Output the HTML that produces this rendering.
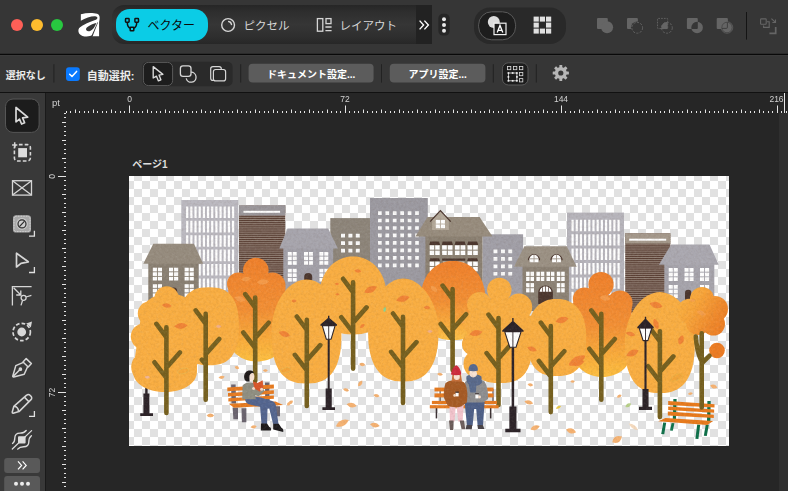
<!DOCTYPE html>
<html lang="ja"><head><meta charset="utf-8"><title>Affinity</title>
<style>
html,body{margin:0;padding:0;background:#262626;}
body{width:788px;height:491px;overflow:hidden;position:relative;font-family:"Liberation Sans",sans-serif;}
#top{position:absolute;left:0;top:0;width:788px;height:54px;background:#363636;}
#l1{position:absolute;left:0;top:53px;width:788px;height:3px;background:linear-gradient(#2b2b2b 0,#2b2b2b 33.3%,#090909 33.3%,#090909 66.6%,#3b3b3b 66.6%);}
#tb2{position:absolute;left:0;top:55px;width:788px;height:37px;background:#363636;}
#l2{position:absolute;left:0;top:92px;width:788px;height:1px;background:#111;}
#left{position:absolute;left:0;top:93px;width:45px;height:398px;background:#393939;}
#l3{position:absolute;left:45px;top:93px;width:1px;height:398px;background:#1a1a1a;}
#right{position:absolute;left:779px;top:113px;width:9px;height:378px;background:#2f2f2f;}
#chrome{position:absolute;left:0;top:0;width:788px;height:491px;}
#page{position:absolute;left:129px;top:176px;width:600px;height:270px;overflow:hidden;background:#fff;}
</style></head>
<body>
<div id="top"></div><div id="tb2"></div><div id="l1"></div><div id="l2"></div>
<div id="left"></div><div id="l3"></div><div id="right"></div>
<div id="page"><svg width="600" height="270" viewBox="0 0 600 270" style="display:block">
<defs>
<pattern id="chk" x="5" y="5" width="16" height="16" patternUnits="userSpaceOnUse"><rect width="16" height="16" fill="#fff"/><rect x="8" width="8" height="8" fill="#e1e1e1"/><rect y="8" width="8" height="8" fill="#e1e1e1"/></pattern>
<pattern id="stripe" x="0" y="0.3" width="4" height="1.9" patternUnits="userSpaceOnUse"><rect width="4" height="1.9" fill="#573c31"/><rect y="1.2" width="4" height="0.7" fill="#a8998f"/></pattern>
<linearGradient id="gOr" gradientUnits="userSpaceOnUse" x1="0" y1="82" x2="0" y2="186"><stop offset="0" stop-color="#ef802b"/><stop offset="0.5" stop-color="#f28f34"/><stop offset="0.75" stop-color="#f8a83a"/><stop offset="1" stop-color="#fdc040"/></linearGradient>
<linearGradient id="gOr7" gradientUnits="userSpaceOnUse" x1="0" y1="85" x2="0" y2="165"><stop offset="0" stop-color="#ef802b"/><stop offset="0.5" stop-color="#f28f34"/><stop offset="0.8" stop-color="#f9ac3c"/><stop offset="1" stop-color="#fdc24a"/></linearGradient>
<linearGradient id="gOr10" gradientUnits="userSpaceOnUse" x1="0" y1="96" x2="0" y2="202"><stop offset="0" stop-color="#ef802b"/><stop offset="0.5" stop-color="#f28f34"/><stop offset="0.75" stop-color="#f8a83a"/><stop offset="1" stop-color="#fdc040"/></linearGradient>
<linearGradient id="g12" gradientUnits="userSpaceOnUse" x1="548" y1="120" x2="600" y2="150"><stop offset="0" stop-color="#f9b242"/><stop offset="0.35" stop-color="#f7a439"/><stop offset="0.7" stop-color="#f08b2d"/><stop offset="1" stop-color="#ec7b23"/></linearGradient>
<filter id="grain" x="0" y="0" width="600" height="270" filterUnits="userSpaceOnUse" color-interpolation-filters="sRGB">
<feTurbulence type="fractalNoise" baseFrequency="0.4" numOctaves="3" seed="7" result="n"/>
<feColorMatrix in="n" type="matrix" values="0 0 0 0 0.3  0 0 0 0 0.2  0 0 0 0 0.12  0.2 0 0 0 -0.085" result="d"/>
<feColorMatrix in="n" type="matrix" values="0 0 0 0 1  0 0 0 0 1  0 0 0 0 1  0 0.16 0 0 -0.07" result="l"/>
<feComposite in="d" in2="SourceAlpha" operator="in" result="dg"/>
<feComposite in="l" in2="SourceAlpha" operator="in" result="lg"/>
<feMerge><feMergeNode in="SourceGraphic"/><feMergeNode in="dg"/><feMergeNode in="lg"/></feMerge>
</filter>
</defs>
<rect width="600" height="270" fill="url(#chk)"/>
<g filter="url(#grain)">
<rect x="52.3" y="24" width="57" height="120" fill="#bbb9c0"/>
<path fill="#fff" d="M57.10 30.40h2.2v11.60h-2.2zM61.27 30.40h2.2v11.60h-2.2zM65.44 30.40h2.2v11.60h-2.2zM69.61 30.40h2.2v11.60h-2.2zM73.78 30.40h2.2v11.60h-2.2zM77.95 30.40h2.2v11.60h-2.2zM82.12 30.40h2.2v11.60h-2.2zM86.29 30.40h2.2v11.60h-2.2zM90.46 30.40h2.2v11.60h-2.2zM94.63 30.40h2.2v11.60h-2.2zM98.80 30.40h2.2v11.60h-2.2zM102.97 30.40h2.2v11.60h-2.2zM57.10 44.80h2.2v11.60h-2.2zM61.27 44.80h2.2v11.60h-2.2zM65.44 44.80h2.2v11.60h-2.2zM69.61 44.80h2.2v11.60h-2.2zM73.78 44.80h2.2v11.60h-2.2zM77.95 44.80h2.2v11.60h-2.2zM82.12 44.80h2.2v11.60h-2.2zM86.29 44.80h2.2v11.60h-2.2zM90.46 44.80h2.2v11.60h-2.2zM94.63 44.80h2.2v11.60h-2.2zM98.80 44.80h2.2v11.60h-2.2zM102.97 44.80h2.2v11.60h-2.2zM57.10 59.20h2.2v11.60h-2.2zM61.27 59.20h2.2v11.60h-2.2zM65.44 59.20h2.2v11.60h-2.2zM69.61 59.20h2.2v11.60h-2.2zM73.78 59.20h2.2v11.60h-2.2zM77.95 59.20h2.2v11.60h-2.2zM82.12 59.20h2.2v11.60h-2.2zM86.29 59.20h2.2v11.60h-2.2zM90.46 59.20h2.2v11.60h-2.2zM94.63 59.20h2.2v11.60h-2.2zM98.80 59.20h2.2v11.60h-2.2zM102.97 59.20h2.2v11.60h-2.2zM57.10 73.60h2.2v11.60h-2.2zM61.27 73.60h2.2v11.60h-2.2zM65.44 73.60h2.2v11.60h-2.2zM69.61 73.60h2.2v11.60h-2.2zM73.78 73.60h2.2v11.60h-2.2zM77.95 73.60h2.2v11.60h-2.2zM82.12 73.60h2.2v11.60h-2.2zM86.29 73.60h2.2v11.60h-2.2zM90.46 73.60h2.2v11.60h-2.2zM94.63 73.60h2.2v11.60h-2.2zM98.80 73.60h2.2v11.60h-2.2zM102.97 73.60h2.2v11.60h-2.2zM57.10 88.00h2.2v11.60h-2.2zM61.27 88.00h2.2v11.60h-2.2zM65.44 88.00h2.2v11.60h-2.2zM69.61 88.00h2.2v11.60h-2.2zM73.78 88.00h2.2v11.60h-2.2zM77.95 88.00h2.2v11.60h-2.2zM82.12 88.00h2.2v11.60h-2.2zM86.29 88.00h2.2v11.60h-2.2zM90.46 88.00h2.2v11.60h-2.2zM94.63 88.00h2.2v11.60h-2.2zM98.80 88.00h2.2v11.60h-2.2zM102.97 88.00h2.2v11.60h-2.2zM57.10 102.40h2.2v11.60h-2.2zM61.27 102.40h2.2v11.60h-2.2zM65.44 102.40h2.2v11.60h-2.2zM69.61 102.40h2.2v11.60h-2.2zM73.78 102.40h2.2v11.60h-2.2zM77.95 102.40h2.2v11.60h-2.2zM82.12 102.40h2.2v11.60h-2.2zM86.29 102.40h2.2v11.60h-2.2zM90.46 102.40h2.2v11.60h-2.2zM94.63 102.40h2.2v11.60h-2.2zM98.80 102.40h2.2v11.60h-2.2zM102.97 102.40h2.2v11.60h-2.2zM57.10 116.80h2.2v11.60h-2.2zM61.27 116.80h2.2v11.60h-2.2zM65.44 116.80h2.2v11.60h-2.2zM69.61 116.80h2.2v11.60h-2.2zM73.78 116.80h2.2v11.60h-2.2zM77.95 116.80h2.2v11.60h-2.2zM82.12 116.80h2.2v11.60h-2.2zM86.29 116.80h2.2v11.60h-2.2zM90.46 116.80h2.2v11.60h-2.2zM94.63 116.80h2.2v11.60h-2.2zM98.80 116.80h2.2v11.60h-2.2zM102.97 116.80h2.2v11.60h-2.2zM57.10 131.20h2.2v11.60h-2.2zM61.27 131.20h2.2v11.60h-2.2zM65.44 131.20h2.2v11.60h-2.2zM69.61 131.20h2.2v11.60h-2.2zM73.78 131.20h2.2v11.60h-2.2zM77.95 131.20h2.2v11.60h-2.2zM82.12 131.20h2.2v11.60h-2.2zM86.29 131.20h2.2v11.60h-2.2zM90.46 131.20h2.2v11.60h-2.2zM94.63 131.20h2.2v11.60h-2.2zM98.80 131.20h2.2v11.60h-2.2zM102.97 131.20h2.2v11.60h-2.2z"/>
<rect x="110" y="29.5" width="46.3" height="110" fill="url(#stripe)"/>
<rect x="110" y="29.3" width="46.3" height="10.2" fill="#9a969a"/>
<rect x="114.5" y="34.8" width="36.6" height="2" fill="#fff"/>
<rect x="201.3" y="42.1" width="39.7" height="80" fill="#8d857a"/>
<path fill="#fbfbfb" d="M212.00 57.80h4v3.7h-4zM219.40 57.80h4v3.7h-4zM226.80 57.80h4v3.7h-4zM212.00 65.20h4v3.7h-4zM219.40 65.20h4v3.7h-4zM226.80 65.20h4v3.7h-4zM212.00 72.70h4v3.7h-4zM219.40 72.70h4v3.7h-4zM226.80 72.70h4v3.7h-4z"/>
<rect x="241" y="22" width="57.8" height="100" fill="#9c9aa1"/>
<path fill="#fbfbfb" d="M249.00 35.20h3.7v3.7h-3.7zM256.43 35.20h3.7v3.7h-3.7zM263.86 35.20h3.7v3.7h-3.7zM271.29 35.20h3.7v3.7h-3.7zM278.72 35.20h3.7v3.7h-3.7zM286.15 35.20h3.7v3.7h-3.7zM249.00 42.67h3.7v3.7h-3.7zM256.43 42.67h3.7v3.7h-3.7zM263.86 42.67h3.7v3.7h-3.7zM271.29 42.67h3.7v3.7h-3.7zM278.72 42.67h3.7v3.7h-3.7zM286.15 42.67h3.7v3.7h-3.7zM249.00 50.14h3.7v3.7h-3.7zM256.43 50.14h3.7v3.7h-3.7zM263.86 50.14h3.7v3.7h-3.7zM271.29 50.14h3.7v3.7h-3.7zM278.72 50.14h3.7v3.7h-3.7zM286.15 50.14h3.7v3.7h-3.7zM249.00 57.61h3.7v3.7h-3.7zM256.43 57.61h3.7v3.7h-3.7zM263.86 57.61h3.7v3.7h-3.7zM271.29 57.61h3.7v3.7h-3.7zM278.72 57.61h3.7v3.7h-3.7zM286.15 57.61h3.7v3.7h-3.7zM249.00 65.08h3.7v3.7h-3.7zM256.43 65.08h3.7v3.7h-3.7zM263.86 65.08h3.7v3.7h-3.7zM271.29 65.08h3.7v3.7h-3.7zM278.72 65.08h3.7v3.7h-3.7zM286.15 65.08h3.7v3.7h-3.7zM249.00 72.55h3.7v3.7h-3.7zM256.43 72.55h3.7v3.7h-3.7zM263.86 72.55h3.7v3.7h-3.7zM271.29 72.55h3.7v3.7h-3.7zM278.72 72.55h3.7v3.7h-3.7zM286.15 72.55h3.7v3.7h-3.7zM249.00 80.02h3.7v3.7h-3.7zM256.43 80.02h3.7v3.7h-3.7zM263.86 80.02h3.7v3.7h-3.7zM271.29 80.02h3.7v3.7h-3.7zM278.72 80.02h3.7v3.7h-3.7zM286.15 80.02h3.7v3.7h-3.7zM249.00 87.49h3.7v3.7h-3.7zM256.43 87.49h3.7v3.7h-3.7zM263.86 87.49h3.7v3.7h-3.7zM271.29 87.49h3.7v3.7h-3.7zM278.72 87.49h3.7v3.7h-3.7zM286.15 87.49h3.7v3.7h-3.7z"/>
<rect x="353.5" y="58.3" width="40.6" height="70" fill="#a19fa7"/>
<path fill="#fbfbfb" d="M364.50 73.60h3.9v3.6h-3.9zM372.00 73.60h3.9v3.6h-3.9zM379.30 73.60h3.9v3.6h-3.9zM364.50 81.07h3.9v3.6h-3.9zM372.00 81.07h3.9v3.6h-3.9zM379.30 81.07h3.9v3.6h-3.9zM364.50 88.54h3.9v3.6h-3.9zM372.00 88.54h3.9v3.6h-3.9zM379.30 88.54h3.9v3.6h-3.9zM364.50 96.01h3.9v3.6h-3.9zM372.00 96.01h3.9v3.6h-3.9zM379.30 96.01h3.9v3.6h-3.9z"/>
<rect x="438" y="36.6" width="57" height="100" fill="#b6b4bb"/>
<path fill="#fff" d="M442.50 43.80h2.2v11.40h-2.2zM446.68 43.80h2.2v11.40h-2.2zM450.86 43.80h2.2v11.40h-2.2zM455.04 43.80h2.2v11.40h-2.2zM459.22 43.80h2.2v11.40h-2.2zM463.40 43.80h2.2v11.40h-2.2zM467.58 43.80h2.2v11.40h-2.2zM471.76 43.80h2.2v11.40h-2.2zM475.94 43.80h2.2v11.40h-2.2zM480.12 43.80h2.2v11.40h-2.2zM484.30 43.80h2.2v11.40h-2.2zM488.48 43.80h2.2v11.40h-2.2zM442.50 58.20h2.2v11.40h-2.2zM446.68 58.20h2.2v11.40h-2.2zM450.86 58.20h2.2v11.40h-2.2zM455.04 58.20h2.2v11.40h-2.2zM459.22 58.20h2.2v11.40h-2.2zM463.40 58.20h2.2v11.40h-2.2zM467.58 58.20h2.2v11.40h-2.2zM471.76 58.20h2.2v11.40h-2.2zM475.94 58.20h2.2v11.40h-2.2zM480.12 58.20h2.2v11.40h-2.2zM484.30 58.20h2.2v11.40h-2.2zM488.48 58.20h2.2v11.40h-2.2zM442.50 72.60h2.2v11.40h-2.2zM446.68 72.60h2.2v11.40h-2.2zM450.86 72.60h2.2v11.40h-2.2zM455.04 72.60h2.2v11.40h-2.2zM459.22 72.60h2.2v11.40h-2.2zM463.40 72.60h2.2v11.40h-2.2zM467.58 72.60h2.2v11.40h-2.2zM471.76 72.60h2.2v11.40h-2.2zM475.94 72.60h2.2v11.40h-2.2zM480.12 72.60h2.2v11.40h-2.2zM484.30 72.60h2.2v11.40h-2.2zM488.48 72.60h2.2v11.40h-2.2zM442.50 87.00h2.2v11.40h-2.2zM446.68 87.00h2.2v11.40h-2.2zM450.86 87.00h2.2v11.40h-2.2zM455.04 87.00h2.2v11.40h-2.2zM459.22 87.00h2.2v11.40h-2.2zM463.40 87.00h2.2v11.40h-2.2zM467.58 87.00h2.2v11.40h-2.2zM471.76 87.00h2.2v11.40h-2.2zM475.94 87.00h2.2v11.40h-2.2zM480.12 87.00h2.2v11.40h-2.2zM484.30 87.00h2.2v11.40h-2.2zM488.48 87.00h2.2v11.40h-2.2zM442.50 101.40h2.2v11.40h-2.2zM446.68 101.40h2.2v11.40h-2.2zM450.86 101.40h2.2v11.40h-2.2zM455.04 101.40h2.2v11.40h-2.2zM459.22 101.40h2.2v11.40h-2.2zM463.40 101.40h2.2v11.40h-2.2zM467.58 101.40h2.2v11.40h-2.2zM471.76 101.40h2.2v11.40h-2.2zM475.94 101.40h2.2v11.40h-2.2zM480.12 101.40h2.2v11.40h-2.2zM484.30 101.40h2.2v11.40h-2.2zM488.48 101.40h2.2v11.40h-2.2zM442.50 115.80h2.2v11.40h-2.2zM446.68 115.80h2.2v11.40h-2.2zM450.86 115.80h2.2v11.40h-2.2zM455.04 115.80h2.2v11.40h-2.2zM459.22 115.80h2.2v11.40h-2.2zM463.40 115.80h2.2v11.40h-2.2zM467.58 115.80h2.2v11.40h-2.2zM471.76 115.80h2.2v11.40h-2.2zM475.94 115.80h2.2v11.40h-2.2zM480.12 115.80h2.2v11.40h-2.2zM484.30 115.80h2.2v11.40h-2.2zM488.48 115.80h2.2v11.40h-2.2zM442.50 130.20h2.2v11.40h-2.2zM446.68 130.20h2.2v11.40h-2.2zM450.86 130.20h2.2v11.40h-2.2zM455.04 130.20h2.2v11.40h-2.2zM459.22 130.20h2.2v11.40h-2.2zM463.40 130.20h2.2v11.40h-2.2zM467.58 130.20h2.2v11.40h-2.2zM471.76 130.20h2.2v11.40h-2.2zM475.94 130.20h2.2v11.40h-2.2zM480.12 130.20h2.2v11.40h-2.2zM484.30 130.20h2.2v11.40h-2.2zM488.48 130.20h2.2v11.40h-2.2z"/>
<rect x="496.2" y="57.3" width="45.2" height="80" fill="url(#stripe)"/>
<rect x="496.2" y="57.3" width="45.2" height="10.3" fill="#a4988b"/>
<rect x="500.2" y="62.7" width="37" height="2" fill="#fff"/>
<rect x="19.3" y="87" width="50.3" height="50" fill="#8a8073"/>
<polygon points="24.3,67.8 64.9,67.8 74.2,87.8 14.3,87.8" fill="#968c7e"/>
<g fill="#fff"><rect x="23.80" y="91.70" width="4.15" height="3.67"/><rect x="28.85" y="91.70" width="4.15" height="3.67"/><rect x="23.80" y="96.27" width="4.15" height="3.67"/><rect x="28.85" y="96.27" width="4.15" height="3.67"/><rect x="23.80" y="100.83" width="4.15" height="3.67"/><rect x="28.85" y="100.83" width="4.15" height="3.67"/></g>
<g fill="#fff"><rect x="40.00" y="91.70" width="4.15" height="3.67"/><rect x="45.05" y="91.70" width="4.15" height="3.67"/><rect x="40.00" y="96.27" width="4.15" height="3.67"/><rect x="45.05" y="96.27" width="4.15" height="3.67"/><rect x="40.00" y="100.83" width="4.15" height="3.67"/><rect x="45.05" y="100.83" width="4.15" height="3.67"/></g>
<g fill="#fff"><rect x="55.60" y="91.70" width="4.15" height="3.67"/><rect x="60.65" y="91.70" width="4.15" height="3.67"/><rect x="55.60" y="96.27" width="4.15" height="3.67"/><rect x="60.65" y="96.27" width="4.15" height="3.67"/><rect x="55.60" y="100.83" width="4.15" height="3.67"/><rect x="60.65" y="100.83" width="4.15" height="3.67"/></g>
<g fill="#fff"><rect x="23.80" y="108.20" width="4.15" height="3.67"/><rect x="28.85" y="108.20" width="4.15" height="3.67"/><rect x="23.80" y="112.77" width="4.15" height="3.67"/><rect x="28.85" y="112.77" width="4.15" height="3.67"/><rect x="23.80" y="117.33" width="4.15" height="3.67"/><rect x="28.85" y="117.33" width="4.15" height="3.67"/></g>
<g fill="#fff"><rect x="55.60" y="108.20" width="4.15" height="3.67"/><rect x="60.65" y="108.20" width="4.15" height="3.67"/><rect x="55.60" y="112.77" width="4.15" height="3.67"/><rect x="60.65" y="112.77" width="4.15" height="3.67"/><rect x="55.60" y="117.33" width="4.15" height="3.67"/><rect x="60.65" y="117.33" width="4.15" height="3.67"/></g>
<path d="M41 126v-11a3.6 3.6 0 0 1 7.2 0v11z" fill="#4b362e"/>
<rect x="154.3" y="72" width="49.9" height="50" fill="#a2a0a8"/>
<polygon points="158.5,52.4 199.2,52.4 208.9,72.5 150.3,72.5" fill="#a7a5ad"/>
<g fill="#fff"><rect x="158.80" y="76.00" width="4.00" height="3.67"/><rect x="163.70" y="76.00" width="4.00" height="3.67"/><rect x="158.80" y="80.57" width="4.00" height="3.67"/><rect x="163.70" y="80.57" width="4.00" height="3.67"/><rect x="158.80" y="85.13" width="4.00" height="3.67"/><rect x="163.70" y="85.13" width="4.00" height="3.67"/></g>
<g fill="#fff"><rect x="175.00" y="76.00" width="4.00" height="3.67"/><rect x="179.90" y="76.00" width="4.00" height="3.67"/><rect x="175.00" y="80.57" width="4.00" height="3.67"/><rect x="179.90" y="80.57" width="4.00" height="3.67"/><rect x="175.00" y="85.13" width="4.00" height="3.67"/><rect x="179.90" y="85.13" width="4.00" height="3.67"/></g>
<g fill="#fff"><rect x="190.40" y="76.00" width="4.00" height="3.67"/><rect x="195.30" y="76.00" width="4.00" height="3.67"/><rect x="190.40" y="80.57" width="4.00" height="3.67"/><rect x="195.30" y="80.57" width="4.00" height="3.67"/><rect x="190.40" y="85.13" width="4.00" height="3.67"/><rect x="195.30" y="85.13" width="4.00" height="3.67"/></g>
<g fill="#fff"><rect x="158.80" y="92.80" width="4.00" height="3.67"/><rect x="163.70" y="92.80" width="4.00" height="3.67"/><rect x="158.80" y="97.37" width="4.00" height="3.67"/><rect x="163.70" y="97.37" width="4.00" height="3.67"/><rect x="158.80" y="101.93" width="4.00" height="3.67"/><rect x="163.70" y="101.93" width="4.00" height="3.67"/></g>
<g fill="#fff"><rect x="190.40" y="92.80" width="4.00" height="3.67"/><rect x="195.30" y="92.80" width="4.00" height="3.67"/><rect x="190.40" y="97.37" width="4.00" height="3.67"/><rect x="195.30" y="97.37" width="4.00" height="3.67"/><rect x="190.40" y="101.93" width="4.00" height="3.67"/><rect x="195.30" y="101.93" width="4.00" height="3.67"/></g>
<path d="M175.2 107v-6a4 4 0 0 1 8 0v6z" fill="#4b362e"/>
<rect x="296.4" y="60" width="57.1" height="60" fill="#8b8072"/>
<polygon points="298.5,41.1 350.6,41.1 363.5,60.4 286.4,60.4" fill="#978c7d"/>
<polygon points="303.1,54 303.1,43.5 311.4,35 319.9,43.5 319.9,54" fill="#b3a899"/>
<g fill="#fff"><rect x="306.80" y="43.90" width="4.20" height="3.75"/><rect x="311.80" y="43.90" width="4.20" height="3.75"/><rect x="306.80" y="48.45" width="4.20" height="3.75"/><rect x="311.80" y="48.45" width="4.20" height="3.75"/></g>
<polyline points="301.1,45.6 311.4,34.6 321.7,45.6" fill="none" stroke="#4b362e" stroke-width="1.3" stroke-linejoin="miter"/>
<path d="M300.3 69l1-3.4h8.8l1 3.4z" fill="#4b362e"/>
<g fill="#fff"><rect x="300.70" y="69.30" width="4.50" height="4.35"/><rect x="306.20" y="69.30" width="4.50" height="4.35"/><rect x="300.70" y="74.65" width="4.50" height="4.35"/><rect x="306.20" y="74.65" width="4.50" height="4.35"/></g>
<path d="M312.70000000000005 69l1-3.4h9.200000000000001l1 3.4z" fill="#4b362e"/>
<g fill="#fff"><rect x="313.10" y="69.30" width="4.70" height="4.35"/><rect x="318.80" y="69.30" width="4.70" height="4.35"/><rect x="313.10" y="74.65" width="4.70" height="4.35"/><rect x="318.80" y="74.65" width="4.70" height="4.35"/></g>
<path d="M325.5 69l1-3.4h9.200000000000001l1 3.4z" fill="#4b362e"/>
<g fill="#fff"><rect x="325.90" y="69.30" width="4.70" height="4.35"/><rect x="331.60" y="69.30" width="4.70" height="4.35"/><rect x="325.90" y="74.65" width="4.70" height="4.35"/><rect x="331.60" y="74.65" width="4.70" height="4.35"/></g>
<path d="M338.1 69l1-3.4h9.100000000000001l1 3.4z" fill="#4b362e"/>
<g fill="#fff"><rect x="338.50" y="69.30" width="4.65" height="4.35"/><rect x="344.15" y="69.30" width="4.65" height="4.35"/><rect x="338.50" y="74.65" width="4.65" height="4.35"/><rect x="344.15" y="74.65" width="4.65" height="4.35"/></g>
<path d="M300.3 85.3l1-3h8.8l1 3z" fill="#4b362e"/>
<g fill="#fff"><rect x="300.70" y="85.60" width="4.50" height="4.35"/><rect x="306.20" y="85.60" width="4.50" height="4.35"/><rect x="300.70" y="90.95" width="4.50" height="4.35"/><rect x="306.20" y="90.95" width="4.50" height="4.35"/></g>
<path d="M338.1 85.3l1-3h9.100000000000001l1 3z" fill="#4b362e"/>
<g fill="#fff"><rect x="338.50" y="85.60" width="4.65" height="4.35"/><rect x="344.15" y="85.60" width="4.65" height="4.35"/><rect x="338.50" y="90.95" width="4.65" height="4.35"/><rect x="344.15" y="90.95" width="4.65" height="4.35"/></g>
<rect x="313.1" y="82.5" width="23.2" height="2.2" fill="#4b362e"/>
<rect x="314" y="85.6" width="21.4" height="6" fill="#d8d0c4"/>
<rect x="393.5" y="90" width="46.4" height="45" fill="#8c8275"/>
<polygon points="395.4,70.3 437.8,70.3 447.7,90.7 385,90.7" fill="#9b9184"/>
<path d="M399.4 84.3a5.6 5.6 0 0 1 11.2 0" fill="none" stroke="#4b362e" stroke-width="1.2"/>
<path d="M400.6 86.2v-3a4.4 4.4 0 0 1 8.8 0v3z" fill="#fff"/>
<path d="M405 78.6v7.6M400.6 82.8h8.8" stroke="#9b9184" stroke-width="0.8"/>
<path d="M421.9 84.3a5.6 5.6 0 0 1 11.2 0" fill="none" stroke="#4b362e" stroke-width="1.2"/>
<path d="M423.1 86.2v-3a4.4 4.4 0 0 1 8.8 0v3z" fill="#fff"/>
<path d="M427.5 78.6v7.6M423.1 82.8h8.8" stroke="#9b9184" stroke-width="0.8"/>
<g fill="#fff"><rect x="397.10" y="95.70" width="3.50" height="4.20"/><rect x="401.50" y="95.70" width="3.50" height="4.20"/><rect x="397.10" y="100.80" width="3.50" height="4.20"/><rect x="401.50" y="100.80" width="3.50" height="4.20"/></g>
<g fill="#fff"><rect x="407.40" y="95.70" width="3.50" height="4.20"/><rect x="411.80" y="95.70" width="3.50" height="4.20"/><rect x="407.40" y="100.80" width="3.50" height="4.20"/><rect x="411.80" y="100.80" width="3.50" height="4.20"/></g>
<g fill="#fff"><rect x="417.50" y="95.70" width="3.50" height="4.20"/><rect x="421.90" y="95.70" width="3.50" height="4.20"/><rect x="417.50" y="100.80" width="3.50" height="4.20"/><rect x="421.90" y="100.80" width="3.50" height="4.20"/></g>
<g fill="#fff"><rect x="427.80" y="95.70" width="3.50" height="4.20"/><rect x="432.20" y="95.70" width="3.50" height="4.20"/><rect x="427.80" y="100.80" width="3.50" height="4.20"/><rect x="432.20" y="100.80" width="3.50" height="4.20"/></g>
<g fill="#fff"><rect x="397.10" y="107.10" width="3.50" height="4.20"/><rect x="401.50" y="107.10" width="3.50" height="4.20"/><rect x="397.10" y="112.20" width="3.50" height="4.20"/><rect x="401.50" y="112.20" width="3.50" height="4.20"/></g>
<g fill="#fff"><rect x="427.80" y="107.10" width="3.50" height="4.20"/><rect x="432.20" y="107.10" width="3.50" height="4.20"/><rect x="427.80" y="112.20" width="3.50" height="4.20"/><rect x="432.20" y="112.20" width="3.50" height="4.20"/></g>
<path d="M409.2 128v-11.2a7.35 7.35 0 0 1 14.7 0v11.2z" fill="#4b362e"/>
<path d="M410.6 115.8a5.9 5.5 0 0 1 11.8 0z" fill="#fff"/>
<path d="M416.5 110v6M413.5 111.2v4.6M419.5 111.2v4.6" stroke="#4b362e" stroke-width="0.7"/>
<rect x="535.3" y="88" width="50" height="50" fill="#a6a4ac"/>
<polygon points="542.2,68.4 580.5,68.4 589.7,88.8 529.9,88.8" fill="#aaa8b0"/>
<g fill="#fff"><rect x="539.70" y="92.00" width="4.10" height="3.73"/><rect x="544.70" y="92.00" width="4.10" height="3.73"/><rect x="539.70" y="96.63" width="4.10" height="3.73"/><rect x="544.70" y="96.63" width="4.10" height="3.73"/><rect x="539.70" y="101.27" width="4.10" height="3.73"/><rect x="544.70" y="101.27" width="4.10" height="3.73"/></g>
<g fill="#fff"><rect x="555.50" y="92.00" width="4.10" height="3.73"/><rect x="560.50" y="92.00" width="4.10" height="3.73"/><rect x="555.50" y="96.63" width="4.10" height="3.73"/><rect x="560.50" y="96.63" width="4.10" height="3.73"/><rect x="555.50" y="101.27" width="4.10" height="3.73"/><rect x="560.50" y="101.27" width="4.10" height="3.73"/></g>
<g fill="#fff"><rect x="571.00" y="92.00" width="4.10" height="3.73"/><rect x="576.00" y="92.00" width="4.10" height="3.73"/><rect x="571.00" y="96.63" width="4.10" height="3.73"/><rect x="576.00" y="96.63" width="4.10" height="3.73"/><rect x="571.00" y="101.27" width="4.10" height="3.73"/><rect x="576.00" y="101.27" width="4.10" height="3.73"/></g>
<g fill="#fff"><rect x="539.70" y="109.00" width="4.10" height="3.73"/><rect x="544.70" y="109.00" width="4.10" height="3.73"/><rect x="539.70" y="113.63" width="4.10" height="3.73"/><rect x="544.70" y="113.63" width="4.10" height="3.73"/><rect x="539.70" y="118.27" width="4.10" height="3.73"/><rect x="544.70" y="118.27" width="4.10" height="3.73"/></g>
<g fill="#fff"><rect x="571.00" y="109.00" width="4.10" height="3.73"/><rect x="576.00" y="109.00" width="4.10" height="3.73"/><rect x="571.00" y="113.63" width="4.10" height="3.73"/><rect x="576.00" y="113.63" width="4.10" height="3.73"/><rect x="571.00" y="118.27" width="4.10" height="3.73"/><rect x="576.00" y="118.27" width="4.10" height="3.73"/></g>
<path d="M556 128v-11a3.2 3.2 0 0 1 6.4 0v11z" fill="#4b362e"/>
<path d="M16.2 205h2.4v12.5h1.8v19.8h3.6v2.7h-12.8v-2.7h3.2v-19.8h1.8z" fill="#2c2328"/>
<g fill="url(#gOr)"><circle cx="126.8" cy="94.5" r="12.8"/><circle cx="109.5" cy="108" r="11.5"/><circle cx="143.5" cy="109.5" r="13"/><path d="M99.3 112c0-10 57.2-10 57.2 0v48c0 34-57.2 34-57.2 0z"/></g>
<g fill="url(#gOr7)"><polygon points="356.5,124.5 356.4,130.1 356.1,134.2 355.6,137.9 354.9,141.2 354.0,144.3 353.0,147.2 351.7,149.8 350.3,152.2 348.6,154.4 346.8,156.4 344.8,158.2 342.7,159.7 340.3,161.0 337.8,162.1 335.0,162.9 332.0,163.5 328.6,163.9 324.0,164.0 319.4,163.9 316.0,163.5 313.0,162.9 310.2,162.1 307.7,161.0 305.3,159.7 303.2,158.2 301.2,156.4 299.4,154.4 297.7,152.2 296.3,149.8 295.0,147.2 294.0,144.3 293.1,141.2 292.4,137.9 291.9,134.2 291.6,130.1 291.5,124.5 291.6,120.4 292.0,116.7 292.5,113.3 293.3,109.9 294.3,106.8 295.6,103.8 297.0,100.9 298.6,98.3 300.5,95.9 302.5,93.7 304.6,91.7 306.9,89.9 309.4,88.5 312.0,87.2 314.8,86.3 317.6,85.6 320.6,85.1 324.0,85.0 327.4,85.1 330.4,85.6 333.2,86.3 336.0,87.2 338.6,88.5 341.1,89.9 343.4,91.7 345.5,93.7 347.5,95.9 349.4,98.3 351.0,100.9 352.4,103.8 353.7,106.8 354.7,109.9 355.5,113.3 356.0,116.7 356.4,120.4"/></g>
<g fill="url(#gOr10)"><circle cx="472" cy="108.5" r="12.6"/><circle cx="455.5" cy="123" r="11.6"/><circle cx="491" cy="127" r="12.6"/><path d="M444 128c0-12 58.6-12 58.6 0v46c0 36-58.6 36-58.6 0z"/></g>
<g fill="#f9ae42"><circle cx="37.7" cy="122.4" r="12.2"/><circle cx="21" cy="137.5" r="12.2"/><circle cx="14.8" cy="160.5" r="13"/><circle cx="17.5" cy="191" r="15.3"/><path d="M12 140c0-30 56-30 56 0v55c0 28-64 28-64 0z"/><polygon points="109.8,150.3 109.7,156.3 109.4,160.4 109.0,164.1 108.4,167.4 107.6,170.4 106.7,173.2 105.5,175.7 104.2,178.1 102.8,180.2 101.2,182.1 99.4,183.8 97.4,185.2 95.3,186.5 92.9,187.5 90.4,188.3 87.6,188.8 84.4,189.2 79.8,189.3 75.2,189.2 72.0,188.8 69.2,188.3 66.7,187.5 64.3,186.5 62.2,185.2 60.2,183.8 58.4,182.1 56.8,180.2 55.4,178.1 54.1,175.7 52.9,173.2 52.0,170.4 51.2,167.4 50.6,164.1 50.2,160.4 49.9,156.3 49.8,150.3 49.9,144.3 50.2,140.2 50.6,136.5 51.2,133.2 52.0,130.2 52.9,127.4 54.1,124.9 55.4,122.5 56.8,120.4 58.4,118.5 60.2,116.8 62.2,115.4 64.3,114.1 66.7,113.1 69.2,112.3 72.0,111.8 75.2,111.4 79.8,111.3 84.4,111.4 87.6,111.8 90.4,112.3 92.9,113.1 95.3,114.1 97.4,115.4 99.4,116.8 101.2,118.5 102.8,120.4 104.2,122.5 105.5,124.9 106.7,127.4 107.6,130.2 108.4,133.2 109.0,136.5 109.4,140.2 109.7,144.3"/><polygon points="212.5,155.5 212.4,163.5 212.1,169.0 211.6,173.9 210.9,178.3 209.9,182.3 208.8,186.0 207.5,189.4 206.0,192.5 204.3,195.3 202.4,197.9 200.3,200.1 198.0,202.1 195.5,203.7 192.8,205.1 189.9,206.1 186.6,206.9 182.9,207.3 177.5,207.5 172.1,207.3 168.4,206.9 165.1,206.1 162.2,205.1 159.5,203.7 157.0,202.1 154.7,200.1 152.6,197.9 150.7,195.3 149.0,192.5 147.5,189.4 146.2,186.0 145.1,182.3 144.1,178.3 143.4,173.9 142.9,169.0 142.6,163.5 142.5,155.5 142.6,151.2 143.0,146.9 143.7,142.5 144.7,138.2 145.9,134.0 147.3,130.0 149.0,126.1 150.9,122.5 153.0,119.1 155.3,115.9 157.7,113.1 160.3,110.6 163.0,108.5 165.9,106.7 168.7,105.3 171.7,104.3 174.6,103.7 177.5,103.5 180.4,103.7 183.3,104.3 186.3,105.3 189.1,106.7 192.0,108.5 194.7,110.6 197.3,113.1 199.7,115.9 202.0,119.1 204.1,122.5 206.0,126.1 207.7,130.0 209.1,134.0 210.3,138.2 211.3,142.5 212.0,146.9 212.4,151.2"/><polygon points="257.5,119.4 257.4,124.9 257.1,129.0 256.6,132.6 255.9,135.9 255.0,139.0 253.9,141.8 252.6,144.4 251.1,146.8 249.4,149.0 247.5,150.9 245.5,152.6 243.2,154.2 240.8,155.4 238.2,156.5 235.4,157.3 232.3,157.9 228.8,158.3 224.0,158.4 219.2,158.3 215.7,157.9 212.6,157.3 209.8,156.5 207.2,155.4 204.8,154.2 202.5,152.6 200.5,150.9 198.6,149.0 196.9,146.8 195.4,144.4 194.1,141.8 193.0,139.0 192.1,135.9 191.4,132.6 190.9,129.0 190.6,124.9 190.5,119.4 190.6,115.8 191.0,112.3 191.6,109.0 192.5,105.7 193.6,102.6 194.9,99.6 196.4,96.7 198.2,94.1 200.1,91.6 202.2,89.3 204.5,87.3 207.0,85.5 209.5,84.0 212.2,82.7 215.0,81.7 217.9,81.0 220.9,80.5 224.0,80.4 227.1,80.5 230.1,81.0 233.0,81.7 235.8,82.7 238.5,84.0 241.0,85.5 243.5,87.3 245.8,89.3 247.9,91.6 249.8,94.1 251.6,96.7 253.1,99.6 254.4,102.6 255.5,105.7 256.4,109.0 257.0,112.3 257.4,115.8"/><polygon points="309.5,154.0 309.4,161.3 309.1,166.7 308.5,171.5 307.8,175.8 306.8,179.9 305.7,183.6 304.3,187.0 302.7,190.2 301.0,193.0 299.0,195.6 296.9,197.9 294.5,199.9 292.0,201.6 289.2,203.0 286.2,204.1 283.0,204.9 279.3,205.3 274.3,205.5 269.3,205.3 265.6,204.9 262.4,204.1 259.4,203.0 256.6,201.6 254.1,199.9 251.7,197.9 249.6,195.6 247.6,193.0 245.9,190.2 244.3,187.0 242.9,183.6 241.8,179.9 240.8,175.8 240.1,171.5 239.5,166.7 239.2,161.3 239.1,154.0 239.2,150.1 239.7,145.8 240.4,141.6 241.3,137.4 242.6,133.2 244.0,129.2 245.8,125.3 247.7,121.7 249.9,118.2 252.2,115.1 254.7,112.3 257.3,109.7 260.1,107.6 262.9,105.8 265.8,104.3 268.7,103.3 271.6,102.7 274.3,102.5 277.0,102.7 279.9,103.3 282.8,104.3 285.7,105.8 288.5,107.6 291.3,109.7 293.9,112.3 296.4,115.1 298.7,118.2 300.9,121.7 302.8,125.3 304.6,129.2 306.0,133.2 307.3,137.4 308.2,141.6 308.9,145.8 309.4,150.1"/><circle cx="370.3" cy="114" r="12.2"/><circle cx="350.5" cy="128.5" r="12.4"/><circle cx="389.8" cy="131" r="13.4"/><circle cx="345.8" cy="147" r="11.8"/><circle cx="344.8" cy="168" r="11.8"/><circle cx="348.5" cy="188" r="14"/><circle cx="397.5" cy="150" r="11"/><polygon points="403.3,164.5 403.2,171.5 402.9,176.1 402.5,180.1 401.8,183.7 401.0,187.0 400.0,189.9 398.8,192.7 397.5,195.1 395.9,197.4 394.2,199.4 392.3,201.2 390.2,202.7 388.0,204.0 385.5,205.1 382.7,205.9 379.7,206.5 376.1,206.9 370.8,207.0 365.5,206.9 361.9,206.5 358.9,205.9 356.1,205.1 353.6,204.0 351.4,202.7 349.3,201.2 347.4,199.4 345.7,197.4 344.1,195.1 342.8,192.7 341.6,189.9 340.6,187.0 339.8,183.7 339.1,180.1 338.7,176.1 338.4,171.5 338.3,164.5 338.4,157.5 338.7,152.9 339.1,148.9 339.8,145.3 340.6,142.0 341.6,139.1 342.8,136.3 344.1,133.9 345.7,131.6 347.4,129.6 349.3,127.8 351.4,126.3 353.6,125.0 356.1,123.9 358.9,123.1 361.9,122.5 365.5,122.1 370.8,122.0 376.1,122.1 379.7,122.5 382.7,123.1 385.5,123.9 388.0,125.0 390.2,126.3 392.3,127.8 394.2,129.6 395.9,131.6 397.5,133.9 398.8,136.3 400.0,139.1 401.0,142.0 401.8,145.3 402.5,148.9 402.9,152.9 403.2,157.5"/><polygon points="457.2,161.5 457.1,167.4 456.9,171.5 456.4,175.1 455.8,178.4 455.0,181.3 454.1,184.1 453.0,186.6 451.7,188.9 450.3,191.0 448.7,192.9 446.9,194.5 445.0,196.0 442.9,197.2 440.6,198.2 438.1,199.0 435.4,199.5 432.2,199.9 427.7,200.0 423.2,199.9 420.0,199.5 417.3,199.0 414.8,198.2 412.5,197.2 410.4,196.0 408.5,194.5 406.7,192.9 405.1,191.0 403.7,188.9 402.4,186.6 401.3,184.1 400.4,181.3 399.6,178.4 399.0,175.1 398.5,171.5 398.3,167.4 398.2,161.5 398.3,156.9 398.6,153.1 399.1,149.6 399.8,146.4 400.6,143.3 401.7,140.4 402.9,137.8 404.3,135.3 405.9,133.0 407.6,131.0 409.5,129.1 411.6,127.5 413.8,126.2 416.1,125.0 418.6,124.1 421.3,123.5 424.2,123.1 427.7,123.0 431.2,123.1 434.1,123.5 436.8,124.1 439.3,125.0 441.6,126.2 443.8,127.5 445.9,129.1 447.8,131.0 449.5,133.0 451.1,135.3 452.5,137.8 453.7,140.4 454.8,143.3 455.6,146.4 456.3,149.6 456.8,153.1 457.1,156.9"/><polygon points="565.8,166.6 565.7,173.8 565.4,179.0 564.8,183.7 564.1,188.0 563.2,192.0 562.0,195.6 560.6,199.0 559.1,202.1 557.3,204.9 555.4,207.4 553.2,209.7 550.9,211.6 548.4,213.3 545.6,214.6 542.7,215.7 539.4,216.5 535.8,216.9 530.8,217.1 525.8,216.9 522.2,216.5 518.9,215.7 516.0,214.6 513.2,213.3 510.7,211.6 508.4,209.7 506.2,207.4 504.3,204.9 502.5,202.1 501.0,199.0 499.6,195.6 498.4,192.0 497.5,188.0 496.8,183.7 496.2,179.0 495.9,173.8 495.8,166.6 495.9,162.5 496.3,158.2 497.0,154.0 498.0,149.8 499.2,145.7 500.6,141.8 502.3,138.0 504.2,134.5 506.3,131.2 508.6,128.2 511.0,125.4 513.6,123.0 516.3,120.9 519.2,119.2 522.0,117.9 525.0,116.9 527.9,116.3 530.8,116.1 533.7,116.3 536.6,116.9 539.6,117.9 542.4,119.2 545.3,120.9 548.0,123.0 550.6,125.4 553.0,128.2 555.3,131.2 557.4,134.5 559.3,138.0 561.0,141.8 562.4,145.7 563.6,149.8 564.6,154.0 565.3,158.2 565.7,162.5"/></g>
<g fill="url(#g12)"><circle cx="573" cy="123" r="12"/><circle cx="560.5" cy="135" r="12.3"/><circle cx="586" cy="133" r="13"/><circle cx="569" cy="147" r="12"/><circle cx="584.5" cy="148" r="11.5"/><circle cx="575" cy="136" r="14"/><circle cx="588" cy="174.5" r="7.8"/></g>
<path d="M-4.93 0Q0 -4.60 4.93 0Q0 4.60 -4.93 0z" transform="translate(37.7 129.5) rotate(5)" fill="#ef8236" opacity="0.95"/><path d="M-6.72 0Q0 -5.98 6.72 0Q0 5.98 -6.72 0z" transform="translate(51.9 149.9) rotate(-5)" fill="#ef8236" opacity="0.95"/><path d="M-3.58 0Q0 -3.22 3.58 0Q0 3.22 -3.58 0z" transform="translate(228.9 95) rotate(10)" fill="#ef8236" opacity="0.95"/><path d="M-6.94 0Q0 -5.98 6.94 0Q0 5.98 -6.94 0z" transform="translate(241.6 113.6) rotate(-25)" fill="#ef8236" opacity="0.95"/><path d="M-6.94 0Q0 -5.98 6.94 0Q0 5.98 -6.94 0z" transform="translate(273.9 122.7) rotate(-15)" fill="#ef8236" opacity="0.95"/><path d="M-2.91 0Q0 -3.22 2.91 0Q0 3.22 -2.91 0z" transform="translate(233.3 150) rotate(-40)" fill="#ef8236" opacity="0.95"/><path d="M-2.24 0Q0 -2.30 2.24 0Q0 2.30 -2.24 0z" transform="translate(208.4 118.3) rotate(0)" fill="#ef8236" opacity="0.95"/><path d="M-2.69 0Q0 -2.76 2.69 0Q0 2.76 -2.69 0z" transform="translate(165 125) rotate(0)" fill="#ef8236" opacity="0.95"/><path d="M-6.05 0Q0 -5.52 6.05 0Q0 5.52 -6.05 0z" transform="translate(155.4 158) rotate(20)" fill="#ef8236" opacity="0.95"/><path d="M-2.24 0Q0 -2.30 2.24 0Q0 2.30 -2.24 0z" transform="translate(208 108) rotate(0)" fill="#ef8236" opacity="0.95"/><path d="M-6.72 0Q0 -5.98 6.72 0Q0 5.98 -6.72 0z" transform="translate(347 157) rotate(-10)" fill="#ef8236" opacity="0.95"/><path d="M-5.04 0Q0 -4.60 5.04 0Q0 4.60 -5.04 0z" transform="translate(403 173) rotate(20)" fill="#ef8236" opacity="0.95"/><path d="M-6.72 0Q0 -5.98 6.72 0Q0 5.98 -6.72 0z" transform="translate(449 187) rotate(-15)" fill="#ef8236" opacity="0.95"/><path d="M-6.72 0Q0 -5.98 6.72 0Q0 5.98 -6.72 0z" transform="translate(433 144) rotate(-15)" fill="#ef8236" opacity="0.95"/><path d="M-3.36 0Q0 -3.68 3.36 0Q0 3.68 -3.36 0z" transform="translate(298 131.5) rotate(5)" fill="#ef8236" opacity="0.95"/><path d="M-6.72 0Q0 -6.44 6.72 0Q0 6.44 -6.72 0z" transform="translate(527 129) rotate(15)" fill="#ef8236" opacity="0.95"/><path d="M-4.93 0Q0 -4.14 4.93 0Q0 4.14 -4.93 0z" transform="translate(501.5 158) rotate(15)" fill="#ef8236" opacity="0.95"/><path d="M-6.72 0Q0 -6.44 6.72 0Q0 6.44 -6.72 0z" transform="translate(503.5 177) rotate(-25)" fill="#ef8236" opacity="0.95"/><path d="M-2.91 0Q0 -9.20 2.91 0Q0 9.20 -2.91 0z" transform="translate(552 164) rotate(20)" fill="#ef8236" opacity="0.95"/><path d="M-2.69 0Q0 -10.58 2.69 0Q0 10.58 -2.69 0z" transform="translate(527 148) rotate(-20)" fill="#ef8236" opacity="0.95"/><path d="M-4.03 0Q0 -18.40 4.03 0Q0 18.40 -4.03 0z" transform="translate(448 184.6) rotate(60)" fill="#ef8236" opacity="0.95"/><path d="M-5.04 0Q0 -4.60 5.04 0Q0 4.60 -5.04 0z" transform="translate(117 103) rotate(-5)" fill="#f6a050" opacity="0.8"/><path d="M-6.16 0Q0 -5.52 6.16 0Q0 5.52 -6.16 0z" transform="translate(134 106) rotate(-5)" fill="#f6a050" opacity="0.8"/><path d="M-5.60 0Q0 -5.52 5.60 0Q0 5.52 -5.60 0z" transform="translate(111 123) rotate(15)" fill="#f6a050" opacity="0.8"/><path d="M-4.48 0Q0 -4.60 4.48 0Q0 4.60 -4.48 0z" transform="translate(305 113) rotate(40)" fill="#f6a050" opacity="0.8"/><path d="M-5.60 0Q0 -5.52 5.60 0Q0 5.52 -5.60 0z" transform="translate(476 122) rotate(10)" fill="#f6a050" opacity="0.8"/><path d="M-2.91 0Q0 -2.76 2.91 0Q0 2.76 -2.91 0z" transform="translate(563.5 124.5) rotate(0)" fill="#f6a050" opacity="0.8"/><path d="M-4.93 0Q0 -4.60 4.93 0Q0 4.60 -4.93 0z" transform="translate(572.5 137) rotate(25)" fill="#f6a050" opacity="0.8"/><path d="M-2.69 0Q0 -2.76 2.69 0Q0 2.76 -2.69 0z" transform="translate(333 146) rotate(0)" fill="#f6a050" opacity="0.8"/><path d="M-2.91 0Q0 -3.22 2.91 0Q0 3.22 -2.91 0z" transform="translate(89.6 150.3) rotate(0)" fill="#f0b090" opacity="0.9"/><path d="M-2.69 0Q0 -2.99 2.69 0Q0 2.99 -2.69 0z" transform="translate(18.3 201.3) rotate(0)" fill="#f0b8a0" opacity="0.9"/><ellipse cx="54.2" cy="195" rx="5.6" ry="2.6" transform="rotate(-15 54.2 195)" fill="#f6a83c" stroke="#e3bd58" stroke-width="0.5"/><ellipse cx="156.7" cy="194.2" rx="5" ry="2.4" transform="rotate(-10 156.7 194.2)" fill="#f5a53a" stroke="#e6bb55" stroke-width="0.5"/><path d="M-2.69 0Q0 -2.99 2.69 0Q0 2.99 -2.69 0z" transform="translate(301 155.5) rotate(0)" fill="#f0b090" opacity="0.9"/>
<g fill="#0d7049"><polygon points="544.4,222.9 547.6,223 547,243 543.8,243"/><polygon points="578.4,224.9 581.7,225 581.3,246 578,246"/><polygon points="534.2,246.5 537.2,246.7 535.2,258.2 532.2,258"/><polygon points="542.6,247 545.4,247.2 543.8,254.8 541,254.6"/><polygon points="568.2,248.5 571.2,248.7 569.4,263 566.4,262.8"/><polygon points="576.8,248.5 579.8,248.7 577.8,260 574.8,259.8"/></g><g fill="#e87a1c"><polygon points="539.2,224.9 585.5,228.2 585.5,231.5 539.2,228.9"/><polygon points="539.2,230.4 585.1,233.5 585.1,236.8 539.2,233.9"/><polygon points="538.8,235.5 584.8,238.8 584.8,242.1 538.8,239.4"/><polygon points="536.5,242.1 584.2,245 578.2,248.9 529.2,245.2"/></g>
<path d="M37.4 151.3V236.9M37.4 161.4L27.4 147.9M37.4 191.7L50.9 176.5M37.4 201.8L25.5 186.3M76.7 137.8V223.8M76.7 147.9L66.7 134.4M76.7 178.2L90.2 163.0M76.7 188.3L72.8 183.8M126.2 121.5V205.0M126.2 131.6L116.2 118.1M126.2 161.9L139.7 146.7M126.2 172.0L114.3 156.5M177.8 143.9V229.9M177.8 154.0L167.8 140.5M177.8 184.29999999999998L191.3 169.1M177.8 194.39999999999998L165.9 178.9M224.1 106.2V192.6M224.1 116.3L214.1 102.8M224.1 146.6L237.6 131.4M224.1 156.7L212.2 141.2M274 140.9V226.9M274 151.0L264.0 137.5M274 181.29999999999998L287.5 166.1M274 191.39999999999998L262.1 175.9M323.6 113.0V194.0M323.6 123.1L313.6 109.6M323.6 153.4L337.1 138.2M323.6 163.5L311.7 148.0M369.5 142.1V228.9M369.5 152.20000000000002L359.5 138.7M369.5 182.5L383.0 167.3M369.5 192.60000000000002L357.6 177.1M421.8 150.0V236.1M421.8 160.10000000000002L411.8 146.6M421.8 190.4L435.3 175.2M421.8 200.5L409.9 185.0M472.3 137.8V223.8M472.3 147.9L462.3 134.4M472.3 178.2L485.8 163.0M472.3 188.3L460.4 172.8M530.9 155.2V241.1M530.9 165.3L520.9 151.8M530.9 195.6L544.4 180.4M530.9 205.7L519.0 190.2M572.7 157.2V231.5M566.8 160.5C567.5 170 569 178 572 184M573.5 186.5L580.4 179.8" fill="none" stroke="#76601f" stroke-width="4.6" stroke-linecap="round" stroke-linejoin="round"/>
<path d="M-2.46 0Q0 -3.22 2.46 0Q0 3.22 -2.46 0z" transform="translate(107.9 191.7) rotate(20)" fill="#f5b272" opacity="1"/><path d="M-3.14 0Q0 -3.22 3.14 0Q0 3.22 -3.14 0z" transform="translate(92.6 201.3) rotate(-10)" fill="#f5b272" opacity="1"/><path d="M-2.46 0Q0 -2.76 2.46 0Q0 2.76 -2.46 0z" transform="translate(136.4 194.6) rotate(0)" fill="#f5b272" opacity="1"/><path d="M-3.81 0Q0 -3.68 3.81 0Q0 3.68 -3.81 0z" transform="translate(81.4 239.4) rotate(0)" fill="#f5b272" opacity="1"/><path d="M-3.14 0Q0 -3.22 3.14 0Q0 3.22 -3.14 0z" transform="translate(124.6 250.8) rotate(-10)" fill="#f5b272" opacity="1"/><path d="M-2.24 0Q0 -3.22 2.24 0Q0 3.22 -2.24 0z" transform="translate(159.8 227.8) rotate(-40)" fill="#f5b272" opacity="1"/><path d="M-3.14 0Q0 -3.22 3.14 0Q0 3.22 -3.14 0z" transform="translate(233.3 188.5) rotate(10)" fill="#f5b272" opacity="1"/><path d="M-3.58 0Q0 -3.45 3.58 0Q0 3.45 -3.58 0z" transform="translate(231.2 207.4) rotate(-55)" fill="#f5b272" opacity="1"/><path d="M-3.14 0Q0 -3.22 3.14 0Q0 3.22 -3.14 0z" transform="translate(217 213.9) rotate(15)" fill="#f5b272" opacity="1"/><path d="M-3.14 0Q0 -3.22 3.14 0Q0 3.22 -3.14 0z" transform="translate(247.5 219.6) rotate(10)" fill="#f5b272" opacity="1"/><path d="M-5.15 0Q0 -4.60 5.15 0Q0 4.60 -5.15 0z" transform="translate(222.7 229.2) rotate(10)" fill="#f5b272" opacity="1"/><path d="M-2.91 0Q0 -3.22 2.91 0Q0 3.22 -2.91 0z" transform="translate(161.6 226.3) rotate(-35)" fill="#f5b272" opacity="1"/><path d="M-7.17 0Q0 -5.98 7.17 0Q0 5.98 -7.17 0z" transform="translate(213.3 247.1) rotate(-25)" fill="#f5b272" opacity="1"/><path d="M-4.93 0Q0 -4.60 4.93 0Q0 4.60 -4.93 0z" transform="translate(245.9 249.1) rotate(10)" fill="#f5b272" opacity="1"/><path d="M-2.91 0Q0 -2.99 2.91 0Q0 2.99 -2.91 0z" transform="translate(311 198.2) rotate(5)" fill="#f5b272" opacity="1"/><path d="M-2.91 0Q0 -3.22 2.91 0Q0 3.22 -2.91 0z" transform="translate(401.4 208.8) rotate(10)" fill="#f5b272" opacity="1"/><path d="M-4.48 0Q0 -4.14 4.48 0Q0 4.14 -4.48 0z" transform="translate(399.8 226.3) rotate(15)" fill="#f5b272" opacity="1"/><path d="M-2.24 0Q0 -2.53 2.24 0Q0 2.53 -2.24 0z" transform="translate(443.6 205.4) rotate(0)" fill="#f5b272" opacity="1"/><path d="M-4.93 0Q0 -4.60 4.93 0Q0 4.60 -4.93 0z" transform="translate(406.1 251.8) rotate(-20)" fill="#f5b272" opacity="1"/><path d="M-5.15 0Q0 -5.06 5.15 0Q0 5.06 -5.15 0z" transform="translate(442.1 254.8) rotate(15)" fill="#f5b272" opacity="1"/><path d="M-2.69 0Q0 -2.99 2.69 0Q0 2.99 -2.69 0z" transform="translate(490.2 220.2) rotate(-25)" fill="#f5b272" opacity="1"/><path d="M-3.81 0Q0 -3.91 3.81 0Q0 3.91 -3.81 0z" transform="translate(584.8 210.5) rotate(20)" fill="#f5b272" opacity="1"/><path d="M-2.46 0Q0 -2.53 2.46 0Q0 2.53 -2.46 0z" transform="translate(561.4 217.6) rotate(-10)" fill="#f5b272" opacity="1"/><path d="M-5.60 0Q0 -6.44 5.60 0Q0 6.44 -5.60 0z" transform="translate(488.1 263.4) rotate(-30)" fill="#f5b272" opacity="1"/><path d="M-2.91 0Q0 -2.76 2.91 0Q0 2.76 -2.91 0z" transform="translate(429.5 231.2) rotate(-25)" fill="#e8c84a" opacity="1"/><path d="M-3.36 0Q0 -3.45 3.36 0Q0 3.45 -3.36 0z" transform="translate(499.3 229.2) rotate(-30)" fill="#b8d08a" opacity="1"/><path d="M-5.60 0Q0 -3.68 5.60 0Q0 3.68 -5.60 0z" transform="translate(504.4 250.8) rotate(35)" fill="#f6dcc0" opacity="1"/><path d="M-1.46 0Q0 -5.06 1.46 0Q0 5.06 -1.46 0z" transform="translate(255.7 133.5) rotate(15)" fill="#8fd08a" opacity="1"/><ellipse cx="547.5" cy="201.5" rx="6.5" ry="2.8" transform="rotate(-25 547.5 201.5)" fill="#f3a63a" stroke="#e8b84a" stroke-width="0.5"/>
<path d="M198.7 162.7h2.0V212.5h2.05V231.2h3.25V233.9h-12.6V231.2h3.25V212.5h2.05z" fill="#2c2328"/><path d="M193.29999999999998 149.6h12.8L202.1 163.2h-4.8z" fill="#fff" stroke="#2c2328" stroke-width="1.1" stroke-linejoin="round"/><path d="M199.7 149.6V163.2" stroke="#2c2328" stroke-width="0.9"/><path d="M199.0 139.7h1.4V142.1L208.0 148.6v1.2h-16.6v-1.2L199.0 142.1z" fill="#2c2328"/>
<path d="M382.65 170.8h2.5V230.4h2.3V252.8h4.05V256.3h-15.2V252.8h4.05V230.4h2.3z" fill="#2c2328"/><path d="M375.7 155.6h16.4L387.0 171.3h-6.2z" fill="#fff" stroke="#2c2328" stroke-width="1.1" stroke-linejoin="round"/><path d="M383.9 155.6V171.3" stroke="#2c2328" stroke-width="0.9"/><path d="M383.2 142.1h1.4V145.2L394.59999999999997 154.5v1.2h-21.4v-1.2L383.2 145.2z" fill="#2c2328"/>
<path d="M515.45 164.1h2.1V213.1h1.9999999999999998V230.8h3.45V233.9h-13.0V230.8h3.45V213.1h1.9999999999999998z" fill="#2c2328"/><path d="M510.2 152h12.6L518.9 164.6h-4.8z" fill="#fff" stroke="#2c2328" stroke-width="1.1" stroke-linejoin="round"/><path d="M516.5 152V164.6" stroke="#2c2328" stroke-width="0.9"/><path d="M515.8 140.7h1.4V143.1L524.7 151.0v1.2h-16.4v-1.2L515.8 143.1z" fill="#2c2328"/>
<g fill="#6b6570"><polygon points="102.1,208.4 106.6,208.6 107,227.5 102.5,227.5"/><polygon points="136,206.6 140.4,206.4 140.6,226.5 136.2,226.5"/><polygon points="103.6,231.5 109,231.5 109,243.3 104.4,243.3"/><polygon points="112.5,232.3 117.4,232.3 117.4,246.3 112.9,246.3"/><polygon points="146.4,230.3 151,230.3 151,240.2 147,240.2"/></g><g fill="#e77b20"><polygon points="98.3,211.4 144.9,208.6 144.9,212.4 98.3,215.2"/><polygon points="99,217 144.9,214.2 144.9,217.8 99,220.6"/><polygon points="99.4,222.2 144.9,219.6 144.9,222.8 99.4,225.4"/><polygon points="99.8,227.8 146.4,225.6 154.1,229 105,231.8"/></g>
<path d="M116.6 221.5c4-1.5 12-1.2 16 0.3l10.5 3.2c2.6 0.8 3.6 2.6 4 5.4l2.4 17.6h-5.4l-3.8-15.4-1.8 0.2-0.4 15.2h-5.6l-1.4-17.2-10.4-2.3c-3.6-0.8-5.6-4.6-4.1-7z" fill="#53658f"/><path d="M132 247.6h6l2.4 3.4c1.6 0.6 2 2 1.6 3.6h-10.2z" fill="#1c1a1c"/><path d="M144.2 247.8h5.6l2.6 4c1.8 0.8 2.2 2.6 1.8 4.2l-10-2.4z" fill="#1c1a1c"/><path d="M113.6 209.5c2-3 8-3.6 11.4-2.2l4.6 7.4 4.2-2.6 1.8 2.8-6.2 5.6-3.2-1.6 0.6 4.4h-13.6z" fill="#8f8f82"/><path d="M124 205.5l4.6 1.4 5-2.6 0.8 7-3.6 4.4-5.6-3.4z" fill="#d8562a"/><circle cx="124.6" cy="212.6" r="1.5" fill="#f6dcc8"/><circle cx="132.6" cy="213.2" r="1.5" fill="#f6dcc8"/><ellipse cx="122.8" cy="200.8" rx="2.6" ry="4" fill="#f8e2d2"/><path d="M115.2 202c-0.6-5 2.6-7.6 6-7.4 2.6 0.2 3.8 1.4 3.6 2.4-2.8-0.6-4.6 1-4.4 4.4l0.2 4c-2 0.6-5 0-5.4-3.4z" fill="#1e1a1a"/>
<g fill="#3a3032"><rect x="306.7" y="232" width="1.5" height="10.4"/><rect x="360.9" y="232" width="1.5" height="10.4"/><rect x="310.6" y="213" width="1" height="12"/><rect x="363.5" y="213" width="1" height="12"/></g><g fill="#e77b20"><rect x="305.5" y="211.6" width="59" height="3.8"/><rect x="305.5" y="217.4" width="59" height="4"/><rect x="302.9" y="224.9" width="65" height="3.2"/><rect x="300.8" y="229.2" width="68.8" height="3.1"/></g><path d="M320.4 227.5h14.4l-1.2 18h-4.4l-1.4-14-1.2 0 -1 14h-4.6z" fill="#f2c4cd"/><path d="M320 244.6h4.6l-0.4 9.4h-3.2zM330.6 244.6h4.4l1.2 8.6h-3.6z" fill="#6b5d5b"/><path d="M335.6 226h20l-1.6 23.6h-5.4l-1.4-16.6h-2l-1.6 16.8h-5.6z" fill="#4d5f87"/><path d="M337.6 249h5.6l-0.4 4.2h-6.2zM348.4 249h5.4l1.6 4h-6.4z" fill="#4a4448"/><path d="M336 206c2-3 16-3.4 19.6-0.6 2.6 4 3.8 12 3.4 17.6l-4.6 3.6h-17.4l-2.4-10z" fill="#8e8e90"/><path d="M316.4 207.6c2.4-4.4 16.6-4.6 19.6-0.2 2.6 5 3 13 1.6 19.4l-5.4 3.6c-4 1.4-11 1-13.6-0.8l-3.6-7.6c-0.6-5 0-10 1.4-14.4z" fill="#a65b25"/><path d="M337.4 200.4c3-2.6 11.6-2.8 15 0l0.6 6.4c-1.6 2.2-4 2.8-5.6 3l-0.6 6.6h-5.6l-1.4-8c-2-1.6-2.8-5-2.4-8z" fill="#596a8c"/><rect x="326.6" y="216.4" width="3" height="4" fill="#fff"/><rect x="326.3" y="215.6" width="3.6" height="1.2" fill="#3a3030"/><rect x="346.4" y="218" width="3.2" height="4.4" fill="#fff"/><rect x="346.1" y="217.2" width="3.8" height="1.2" fill="#3a3030"/><circle cx="325.6" cy="219.4" r="1.3" fill="#f6dcc8"/><circle cx="350.6" cy="221" r="1.4" fill="#f6dcc8"/><path d="M323.4 199c0-2 8.8-2 8.8 0l0.8 6.4h-10.4z" fill="#c8703a"/><ellipse cx="327.8" cy="200.8" rx="3" ry="3.2" fill="#f8e2d2"/><path d="M322 198.6c0.4-4.6 3-8.6 5.2-9.4 2.6 1 5 5 5.2 9.4-3 0.8-7.4 0.8-10.4 0z" fill="#cd2a3b"/><ellipse cx="344.2" cy="197.6" rx="3.8" ry="3.8" fill="#f8e2d2"/><path d="M339.6 194.8c-0.4-4 1.6-6.800 4.600-6.800s5 2.600 4.600 6.800c-2.600 0.600-6.600 0.600-9.200 0z" fill="#57698f"/>
</g>
</svg></div>
<svg id="chrome" width="788" height="491" viewBox="0 0 788 491">
<circle cx="17" cy="25" r="6" fill="#fe5f57"/><circle cx="37" cy="25" r="6" fill="#febc2e"/><circle cx="57" cy="25" r="6" fill="#28c840"/>
<g transform="translate(76 11) scale(0.05701)"><path fill="#fff" d="M85 55C180 30 300 28 370 48C428 66 420 135 405 195L405 445L285 445L297 418C230 462 110 460 58 398C25 345 50 290 85 255Z"/><path fill="#363636" d="M20 215L85 172C170 118 290 84 350 95C392 104 378 142 336 157C250 187 130 232 52 300L20 330Z"/><path fill="#363636" d="M358 209C300 220 211 258 182 300C160 340 200 368 248 352C295 332 336 268 358 209Z"/><path fill="#363636" d="M388 196L378 198L272 432L290 446L300 420Z"/></g>
<defs><linearGradient id="seg" x1="0" y1="0" x2="0" y2="1"><stop offset="0" stop-color="#262626"/><stop offset="0.18" stop-color="#2e2e2e"/><stop offset="0.5" stop-color="#363636"/><stop offset="0.82" stop-color="#2e2e2e"/><stop offset="1" stop-color="#272727"/></linearGradient></defs>
<path d="M124 5h292v39h-292a12 12 0 0 1-12-12v-15a12 12 0 0 1 12-12z" fill="url(#seg)"/>
<rect x="416" y="5" width="16" height="39" fill="#222"/>
<rect x="116" y="9" width="92" height="32" rx="14" fill="#0bcce6"/>
<g fill="none" stroke="#111" stroke-width="1.5"><rect x="125.500" y="18.600" width="3.600" height="3.600" rx="0.600"/><rect x="134.900" y="18.600" width="3.600" height="3.600" rx="0.600"/><rect x="130.200" y="27.200" width="3.600" height="3.600" rx="0.600"/><path d="M127.3 22.4c0 3.2 1.4 5.2 3.4 6M136.7 22.4c0 3.2-1.4 5.2-3.4 6"/></g>
<text x="147.400" y="30.200" font-family="'Liberation Sans', 'Noto Sans CJK JP', sans-serif" font-size="12" fill="#0a0a0a">ベクター</text>
<g fill="none" stroke="#d6d6d6" stroke-width="1.4"><circle cx="228.1" cy="25" r="6.4"/><path d="M228.7 21.6A3.5 3.5 0 0 1 231.5 24.4" stroke-linecap="round" stroke-width="1.5"/></g>
<text x="243.600" y="30" font-family="'Liberation Sans', 'Noto Sans CJK JP', sans-serif" font-size="11.500" fill="#d6d6d6">ピクセル</text>
<g fill="none" stroke="#d6d6d6" stroke-width="1.3"><rect x="317.4" y="18.600" width="5.4" height="12.600"/><rect x="326" y="18.600" width="5" height="5"/><path d="M325.4 27h6.2M325.4 30.600h6.2"/></g>
<text x="339.500" y="30" font-family="'Liberation Sans', 'Noto Sans CJK JP', sans-serif" font-size="11.500" fill="#d6d6d6">レイアウト</text>
<path d="M419.6 20.600l4 4.4-4 4.4M424.4 20.600l4 4.4-4 4.4" fill="none" stroke="#fff" stroke-width="1.4"/>
<rect x="438.4" y="13.800" width="11.200" height="21.800" rx="4.500" fill="#262626"/>
<circle cx="444" cy="19.300" r="2" fill="#e8e8e8"/><circle cx="444" cy="25" r="2" fill="#e8e8e8"/><circle cx="444" cy="30.700" r="2" fill="#e8e8e8"/>
<rect x="474" y="7.500" width="92" height="36.500" rx="16" fill="#292929"/>
<rect x="478.600" y="11.800" width="37" height="28" rx="13" fill="#1d1d1d" stroke="#5a5a5a" stroke-width="1"/>
<circle cx="493.800" cy="22" r="6" fill="#dcdcdc"/>
<rect x="494" y="23.200" width="12" height="11.400" fill="#1d1d1d" stroke="#f0f0f0" stroke-width="1.2"/>
<path d="M497.2 32.600l2.800-7.200 2.800 7.200M498.2 30.400h3.600" fill="none" stroke="#fff" stroke-width="1.3"/>
<g fill="#e0e0e0"><rect x="533.600" y="16.600" width="5.200" height="5"/><rect x="539.800" y="16.600" width="5.200" height="5"/><rect x="546.0" y="16.600" width="5.200" height="5"/><rect x="533.600" y="22.600" width="5.200" height="5"/><rect x="546.0" y="22.600" width="5.200" height="5"/><rect x="533.600" y="28.600" width="5.200" height="5"/><rect x="539.800" y="28.600" width="5.200" height="5"/><rect x="546.0" y="28.600" width="5.200" height="5"/></g>
<rect x="597" y="17.900" width="10.800" height="11.100" rx="1" fill="#656565"/><circle cx="607.1" cy="27.300" r="6" fill="#656565"/>
<rect x="627" y="17.900" width="10.900" height="11.100" rx="1" fill="#656565"/><circle cx="637.2" cy="27.800" r="6.300" fill="#363636"/><circle cx="637.2" cy="27.800" r="5.400" fill="none" stroke="#656565" stroke-width="0.9" stroke-dasharray="2.2 1.3"/>
<rect x="657.500" y="18.400" width="10.200" height="10.200" rx="0.800" fill="none" stroke="#656565" stroke-width="0.9" stroke-dasharray="1.7 1.1"/><circle cx="666.900" cy="27.800" r="5.400" fill="none" stroke="#656565" stroke-width="0.9" stroke-dasharray="2.2 1.3"/><path d="M667.7 22.200A5.700 5.700 0 0 0 661.2 29H667.7z" fill="#656565"/>
<path fill-rule="evenodd" d="M687.9 17.900h8.900a1 1 0 0 1 1 1v9a1 1 0 0 1-1 1h-8.900a1 1 0 0 1-1-1v-9a1 1 0 0 1 1-1zM697.1 21.700a5.800 5.800 0 1 1 0 11.600a5.800 5.800 0 1 1 0-11.600z" fill="#656565"/>
<rect x="716.700" y="17.900" width="11.200" height="11" rx="1" fill="#656565"/><circle cx="727" cy="27.500" r="5.800" fill="#656565"/><circle cx="727" cy="27.500" r="5.300" fill="none" stroke="#363636" stroke-width="0.8"/><path d="M721.4 28.400h5a1 1 0 0 0 1-1v-5" fill="none" stroke="#363636" stroke-width="0.8"/><circle cx="727" cy="27.500" r="5.800" fill="none" stroke="#656565" stroke-width="0.6"/>
<rect x="746" y="12" width="1" height="27.600" fill="#141414"/>
<g fill="none" stroke="#656565" stroke-width="1.1"><rect x="760.600" y="18.900" width="5.600" height="5.400" rx="0.600"/><path d="M767 21.800h2.200v5.600h-5.600v-1.800"/><path d="M775.7 27v6.300h-6.300" stroke-width="1.7"/><path d="M771.4 18.600l3.800 3.600M775.5 19.400v3.100h-3.100"/></g>
<text x="5.800" y="79.400" font-family="'Liberation Sans', 'Noto Sans CJK JP', sans-serif" font-size="10" font-weight="bold" fill="#ececec">選択なし</text>
<rect x="53.400" y="64.200" width="1" height="18.400" fill="#222"/>
<rect x="66" y="67.300" width="13.800" height="13.600" rx="3" fill="#0a7aff"/><path d="M69.7 74.300l2.300 2.200 4.600-5.100" fill="none" stroke="#fff" stroke-width="1.5" stroke-linecap="round" stroke-linejoin="round"/>
<text x="86.800" y="79.600" font-family="'Liberation Sans', 'Noto Sans CJK JP', sans-serif" font-size="11" font-weight="bold" fill="#ececec">自動選択:</text>
<rect x="142.200" y="61.800" width="90.400" height="24.400" rx="5" fill="#2a2a2a"/>
<rect x="143.400" y="62.400" width="29.200" height="23.200" rx="5" fill="#1d1d1d" stroke="#5a5a5a" stroke-width="1"/>
<path d="M153.2 66.600V78l3.200-1.900 2 4.800 2.500-1.100-1.900-4.700 3.900-0.700z" fill="#1d1d1d" stroke="#dcdcdc" stroke-width="1.35" stroke-linejoin="round"/>
<g fill="none" stroke="#d6d6d6" stroke-width="1.3"><rect x="180.400" y="65.800" width="10.600" height="10.600" rx="2.600"/><path d="M191 72.200a5 5 0 1 1-4.800 6.200"/></g>
<g stroke="#d6d6d6" stroke-width="1.2"><rect x="210.700" y="66.600" width="10.600" height="13.800" rx="2.200" fill="none"/><rect x="213.400" y="69.500" width="12.200" height="11.400" rx="2.200" fill="#2a2a2a"/></g>
<rect x="240.200" y="64.200" width="1" height="18.400" fill="#222"/>
<rect x="248.600" y="63.800" width="125" height="18.800" rx="4" fill="#5c5c5c"/>
<text x="311.100" y="77.600" text-anchor="middle" font-family="'Liberation Sans', 'Noto Sans CJK JP', sans-serif" font-size="10" font-weight="bold" fill="#fff">ドキュメント設定...</text>
<rect x="381" y="64.200" width="1" height="18.400" fill="#222"/>
<rect x="389.800" y="63.800" width="95.600" height="18.800" rx="4" fill="#5c5c5c"/>
<text x="437.600" y="77.600" text-anchor="middle" font-family="'Liberation Sans', 'Noto Sans CJK JP', sans-serif" font-size="10" font-weight="bold" fill="#fff">アプリ設定...</text>
<rect x="492.800" y="64.200" width="1" height="18.400" fill="#222"/>
<rect x="502.400" y="62.800" width="25.600" height="22.200" rx="6" fill="#1d1d1d" stroke="#5a5a5a" stroke-width="1"/>
<g fill="none" stroke="#dcdcdc" stroke-width="0.8"><rect x="507.500" y="66.400" width="3.300" height="3.300"/><rect x="513.500" y="66.400" width="3.300" height="3.300"/><rect x="519.500" y="66.400" width="3.300" height="3.300"/><rect x="519.500" y="72.400" width="3.300" height="3.300"/><rect x="519.500" y="78.600" width="3.300" height="3.300"/><rect x="508.400" y="73" width="8.500" height="7.800" stroke-width="0.8"/></g>
<g fill="#f0f0f0"><rect x="507.55" y="72.15" width="1.7" height="1.7"/><rect x="507.55" y="76.05" width="1.7" height="1.7"/><rect x="507.55" y="79.95" width="1.7" height="1.7"/><rect x="511.80" y="72.15" width="1.7" height="1.7"/><rect x="511.80" y="79.95" width="1.7" height="1.7"/><rect x="516.05" y="72.15" width="1.7" height="1.7"/><rect x="516.05" y="76.05" width="1.7" height="1.7"/><rect x="516.05" y="79.95" width="1.7" height="1.7"/></g>
<rect x="535.800" y="64.200" width="1" height="18.400" fill="#222"/>
<g transform="translate(560.800 73)" fill="#b6b6b6"><rect x="-1.45" y="-8.100" width="2.900" height="4" rx="0.500" transform="rotate(0)"/><rect x="-1.45" y="-8.100" width="2.900" height="4" rx="0.500" transform="rotate(45)"/><rect x="-1.45" y="-8.100" width="2.900" height="4" rx="0.500" transform="rotate(90)"/><rect x="-1.45" y="-8.100" width="2.900" height="4" rx="0.500" transform="rotate(135)"/><rect x="-1.45" y="-8.100" width="2.900" height="4" rx="0.500" transform="rotate(180)"/><rect x="-1.45" y="-8.100" width="2.900" height="4" rx="0.500" transform="rotate(225)"/><rect x="-1.45" y="-8.100" width="2.900" height="4" rx="0.500" transform="rotate(270)"/><rect x="-1.45" y="-8.100" width="2.900" height="4" rx="0.500" transform="rotate(315)"/><path fill-rule="evenodd" d="M0-6a6 6 0 1 0 0 12a6 6 0 1 0 0-12zM0-2.600a2.600 2.600 0 1 1 0 5.200a2.600 2.600 0 1 1 0-5.200z"/></g>
<rect x="5.500" y="99" width="33.600" height="33.400" rx="7.500" fill="#1c1c1c" stroke="#565656" stroke-width="1"/>
<path d="M16 107.500V121.800l3.500-2.700 2.100 4.900 3-1.200-2-4.900 5.100-0.800z" fill="#1c1c1c" stroke="#dadada" stroke-width="1.7" stroke-linejoin="round"/>
<rect x="14.400" y="144.600" width="16" height="16.400" rx="3" fill="none" stroke="#d6d6d6" stroke-width="1.6" stroke-dasharray="3.7 2.1" stroke-dashoffset="-1.5"/><rect x="18.200" y="148.100" width="8.800" height="9.200" fill="#dcdcdc"/><path d="M12.1 145h5.200M14.700 142.300v5.400" stroke="#d6d6d6" stroke-width="1.5"/>
<rect x="11.200" y="143.600" width="3.200" height="1" fill="#393939" opacity="0"/>
<g fill="none" stroke="#d6d6d6" stroke-width="1.3"><rect x="12.500" y="180.700" width="19" height="14.400"/><path d="M12.500 180.700l19 14.400M31.500 180.700l-19 14.400"/></g>
<rect x="13" y="215.200" width="18" height="17.400" rx="3.200" fill="#a8a8a8"/><rect x="14" y="216.200" width="16" height="15.400" rx="2.400" fill="none" stroke="#dedede" stroke-width="1" stroke-dasharray="0.8 0.8"/><circle cx="22" cy="223.900" r="5.800" fill="#c9c9c9"/><circle cx="22" cy="223.900" r="4" fill="#cfcfcf" stroke="#2a2a2a" stroke-width="1.2"/><path d="M19.400 226.600l5.200-5.400" stroke="#2a2a2a" stroke-width="1.2"/>
<path d="M29 236.200h5.400v-5.400" fill="none" stroke="#e0e0e0" stroke-width="1.3"/>
<path d="M16.500 253.200v13.800l4.500-3.700 7.300-1.500z" fill="none" stroke="#d6d6d6" stroke-width="1.7" stroke-linejoin="round"/>
<path d="M29 272.500h5.400v-5.400" fill="none" stroke="#e0e0e0" stroke-width="1.3"/>
<g fill="none" stroke="#d6d6d6" stroke-width="1.3"><path d="M12.400 305.400v-18.800h19.200"/><path d="M13.600 287.800l7.200 7.200M20.800 290.400v4.600h-4.600"/><circle cx="23.600" cy="297.800" r="2.500"/><path d="M26 297l5.400-1.600M22.600 300.200l-1.600 5.200"/></g>
<circle cx="21.700" cy="332" r="8.700" fill="none" stroke="#d6d6d6" stroke-width="1.7" stroke-dasharray="3.7 2.1"/><circle cx="21.700" cy="332" r="4.400" fill="#d8d8d8"/><path d="M26.200 323.400l5.800-1.800-1.200 5.800z" fill="#d8d8d8"/>
<g fill="none" stroke="#d6d6d6" stroke-width="1.5" stroke-linejoin="round" stroke-linecap="round"><path d="M26.200 358.600l5.200 5-3.200 3.400-5.200-5z"/><path d="M23.400 362.400l-7.600 3.200-3 10.400a0.800 0.800 0 0 0 1 1l10.400-2.800 3.400-7.400"/><path d="M13.200 376.400l6.600-6.600"/><circle cx="20.400" cy="369.200" r="1.100" fill="#d6d6d6"/></g>
<g fill="none" stroke="#d6d6d6" stroke-width="1.55" stroke-linejoin="round"><path d="M26.600 395.200a2.400 2.400 0 0 1 3.400 0l1 1a2.400 2.400 0 0 1 0 3.400l-12 12-5.800 1.600a0.800 0.800 0 0 1-1-1l1.600-5.800z"/><path d="M24.600 397.400l4.600 4.600M14 406.600c2.400-0.400 4.600 1.800 4.400 4.400"/></g>
<path d="M29 416.400h5.400v-5.400" fill="none" stroke="#e0e0e0" stroke-width="1.3"/>
<g fill="none" stroke="#dcdcdc" stroke-width="1.35" stroke-linecap="round"><path d="M12.500 443.500C14.500 442.200 14.800 440.300 14.800 438C14.800 434.400 16.400 433.100 20 433.100C22.900 433.100 24.900 432.100 26.200 430.500"/><path d="M17.700 449.100C19 447.500 20.700 446.700 23.600 446.700C27.200 446.700 28.800 445.500 28.800 441.900C28.800 439 29.800 437 31.400 435.700"/><path d="M12.300 449l19.300-18.400" stroke-width="1.25"/></g><rect x="18" y="436.300" width="7.600" height="7.300" rx="1" fill="#dcdcdc"/>
<rect x="4.200" y="458" width="35.800" height="15" rx="3" fill="#595959"/><path d="M18 461.400l3.600 4-3.600 4M22.600 461.400l3.600 4-3.600 4" fill="none" stroke="#fff" stroke-width="1.2"/>
<rect x="4.200" y="476" width="35.800" height="18" rx="3" fill="#595959"/><circle cx="16" cy="483.700" r="2" fill="#ececec"/><circle cx="22" cy="483.700" r="2" fill="#ececec"/><circle cx="28" cy="483.700" r="2" fill="#ececec"/>
<path fill="#e4e4e4" d="M66 111h1v2h-1zM70 111h1v2h-1zM75 109.500h1v3.500h-1zM79 111h1v2h-1zM84 111h1v2h-1zM88 111h1v2h-1zM93 109.500h1v3.500h-1zM97 111h1v2h-1zM102 111h1v2h-1zM106 111h1v2h-1zM111 109.500h1v3.500h-1zM115 111h1v2h-1zM120 111h1v2h-1zM124 111h1v2h-1zM129 105.500h1v7.500h-1zM133 111h1v2h-1zM138 111h1v2h-1zM142 111h1v2h-1zM147 109.500h1v3.500h-1zM151 111h1v2h-1zM156 111h1v2h-1zM160 111h1v2h-1zM165 109.500h1v3.500h-1zM169 111h1v2h-1zM174 111h1v2h-1zM178 111h1v2h-1zM183 109.500h1v3.500h-1zM187 111h1v2h-1zM192 111h1v2h-1zM196 111h1v2h-1zM201 109.500h1v3.500h-1zM205 111h1v2h-1zM210 111h1v2h-1zM214 111h1v2h-1zM219 109.500h1v3.500h-1zM223 111h1v2h-1zM228 111h1v2h-1zM232 111h1v2h-1zM237 109.500h1v3.500h-1zM241 111h1v2h-1zM246 111h1v2h-1zM250 111h1v2h-1zM255 109.500h1v3.500h-1zM259 111h1v2h-1zM264 111h1v2h-1zM268 111h1v2h-1zM273 109.500h1v3.500h-1zM277 111h1v2h-1zM282 111h1v2h-1zM286 111h1v2h-1zM291 109.500h1v3.500h-1zM295 111h1v2h-1zM300 111h1v2h-1zM304 111h1v2h-1zM309 109.500h1v3.500h-1zM313 111h1v2h-1zM318 111h1v2h-1zM322 111h1v2h-1zM327 109.500h1v3.500h-1zM331 111h1v2h-1zM336 111h1v2h-1zM340 111h1v2h-1zM345 105.500h1v7.500h-1zM349 111h1v2h-1zM354 111h1v2h-1zM358 111h1v2h-1zM363 109.500h1v3.500h-1zM367 111h1v2h-1zM372 111h1v2h-1zM376 111h1v2h-1zM381 109.500h1v3.500h-1zM385 111h1v2h-1zM390 111h1v2h-1zM394 111h1v2h-1zM399 109.500h1v3.500h-1zM403 111h1v2h-1zM408 111h1v2h-1zM412 111h1v2h-1zM417 109.500h1v3.500h-1zM421 111h1v2h-1zM426 111h1v2h-1zM430 111h1v2h-1zM435 109.500h1v3.500h-1zM439 111h1v2h-1zM444 111h1v2h-1zM448 111h1v2h-1zM453 109.500h1v3.500h-1zM457 111h1v2h-1zM462 111h1v2h-1zM466 111h1v2h-1zM471 109.500h1v3.500h-1zM475 111h1v2h-1zM480 111h1v2h-1zM484 111h1v2h-1zM489 109.500h1v3.500h-1zM493 111h1v2h-1zM498 111h1v2h-1zM502 111h1v2h-1zM507 109.500h1v3.500h-1zM511 111h1v2h-1zM516 111h1v2h-1zM520 111h1v2h-1zM525 109.500h1v3.500h-1zM529 111h1v2h-1zM534 111h1v2h-1zM538 111h1v2h-1zM543 109.500h1v3.500h-1zM547 111h1v2h-1zM552 111h1v2h-1zM556 111h1v2h-1zM561 105.500h1v7.500h-1zM565 111h1v2h-1zM570 111h1v2h-1zM574 111h1v2h-1zM579 109.500h1v3.500h-1zM583 111h1v2h-1zM588 111h1v2h-1zM592 111h1v2h-1zM597 109.500h1v3.500h-1zM601 111h1v2h-1zM606 111h1v2h-1zM610 111h1v2h-1zM615 109.500h1v3.500h-1zM619 111h1v2h-1zM624 111h1v2h-1zM628 111h1v2h-1zM633 109.500h1v3.500h-1zM637 111h1v2h-1zM642 111h1v2h-1zM646 111h1v2h-1zM651 109.500h1v3.500h-1zM655 111h1v2h-1zM660 111h1v2h-1zM664 111h1v2h-1zM669 109.500h1v3.500h-1zM673 111h1v2h-1zM678 111h1v2h-1zM682 111h1v2h-1zM687 109.500h1v3.500h-1zM691 111h1v2h-1zM696 111h1v2h-1zM700 111h1v2h-1zM705 109.500h1v3.500h-1zM709 111h1v2h-1zM714 111h1v2h-1zM718 111h1v2h-1zM723 109.500h1v3.500h-1zM727 111h1v2h-1zM732 111h1v2h-1zM736 111h1v2h-1zM741 109.500h1v3.500h-1zM745 111h1v2h-1zM750 111h1v2h-1zM754 111h1v2h-1zM759 109.500h1v3.500h-1zM763 111h1v2h-1zM768 111h1v2h-1zM772 111h1v2h-1zM777 105.500h1v7.500h-1zM781 111h1v2h-1zM786 111h1v2h-1zM64 113h2v1h-2zM64 117h2v1h-2zM62 122h4v1h-4zM64 126h2v1h-2zM64 131h2v1h-2zM64 135h2v1h-2zM62 140h4v1h-4zM64 144h2v1h-2zM64 149h2v1h-2zM64 153h2v1h-2zM62 158h4v1h-4zM64 162h2v1h-2zM64 167h2v1h-2zM64 171h2v1h-2zM58 176h8v1h-8zM64 180h2v1h-2zM64 185h2v1h-2zM64 189h2v1h-2zM62 194h4v1h-4zM64 198h2v1h-2zM64 203h2v1h-2zM64 207h2v1h-2zM62 212h4v1h-4zM64 216h2v1h-2zM64 221h2v1h-2zM64 225h2v1h-2zM62 230h4v1h-4zM64 234h2v1h-2zM64 239h2v1h-2zM64 243h2v1h-2zM62 248h4v1h-4zM64 252h2v1h-2zM64 257h2v1h-2zM64 261h2v1h-2zM62 266h4v1h-4zM64 270h2v1h-2zM64 275h2v1h-2zM64 279h2v1h-2zM62 284h4v1h-4zM64 288h2v1h-2zM64 293h2v1h-2zM64 297h2v1h-2zM62 302h4v1h-4zM64 306h2v1h-2zM64 311h2v1h-2zM64 315h2v1h-2zM62 320h4v1h-4zM64 324h2v1h-2zM64 329h2v1h-2zM64 333h2v1h-2zM62 338h4v1h-4zM64 342h2v1h-2zM64 347h2v1h-2zM64 351h2v1h-2zM62 356h4v1h-4zM64 360h2v1h-2zM64 365h2v1h-2zM64 369h2v1h-2zM62 374h4v1h-4zM64 378h2v1h-2zM64 383h2v1h-2zM64 387h2v1h-2zM58 392h8v1h-8zM64 396h2v1h-2zM64 401h2v1h-2zM64 405h2v1h-2zM62 410h4v1h-4zM64 414h2v1h-2zM64 419h2v1h-2zM64 423h2v1h-2zM62 428h4v1h-4zM64 432h2v1h-2zM64 437h2v1h-2zM64 441h2v1h-2zM62 446h4v1h-4zM64 450h2v1h-2zM64 455h2v1h-2zM64 459h2v1h-2zM62 464h4v1h-4zM64 468h2v1h-2zM64 473h2v1h-2zM64 477h2v1h-2zM62 482h4v1h-4zM64 486h2v1h-2zM64 491h2v1h-2z"/>
<rect x="784" y="93" width="1" height="20" fill="#e8e8e8"/>
<text x="132.300" y="168.100" font-family="'Liberation Sans', 'Noto Sans CJK JP', sans-serif" font-size="10" font-weight="bold" fill="#dedede">ページ1</text>
<g font-family="'Liberation Sans', sans-serif" font-size="8.5" fill="#d6d6d6" text-anchor="middle" opacity="0.98">
<text x="55.900" y="106" font-size="9.5">pt</text>
<text x="129.600" y="101.800">0</text>
<text x="345" y="101.800">72</text>
<text x="561" y="101.800">144</text>
<text x="776.500" y="101.800">216</text>
<text transform="translate(54.800 176.400) rotate(-90)">0</text>
<text transform="translate(54.800 392.400) rotate(-90)">72</text>
</g>
</svg>
</body></html>
